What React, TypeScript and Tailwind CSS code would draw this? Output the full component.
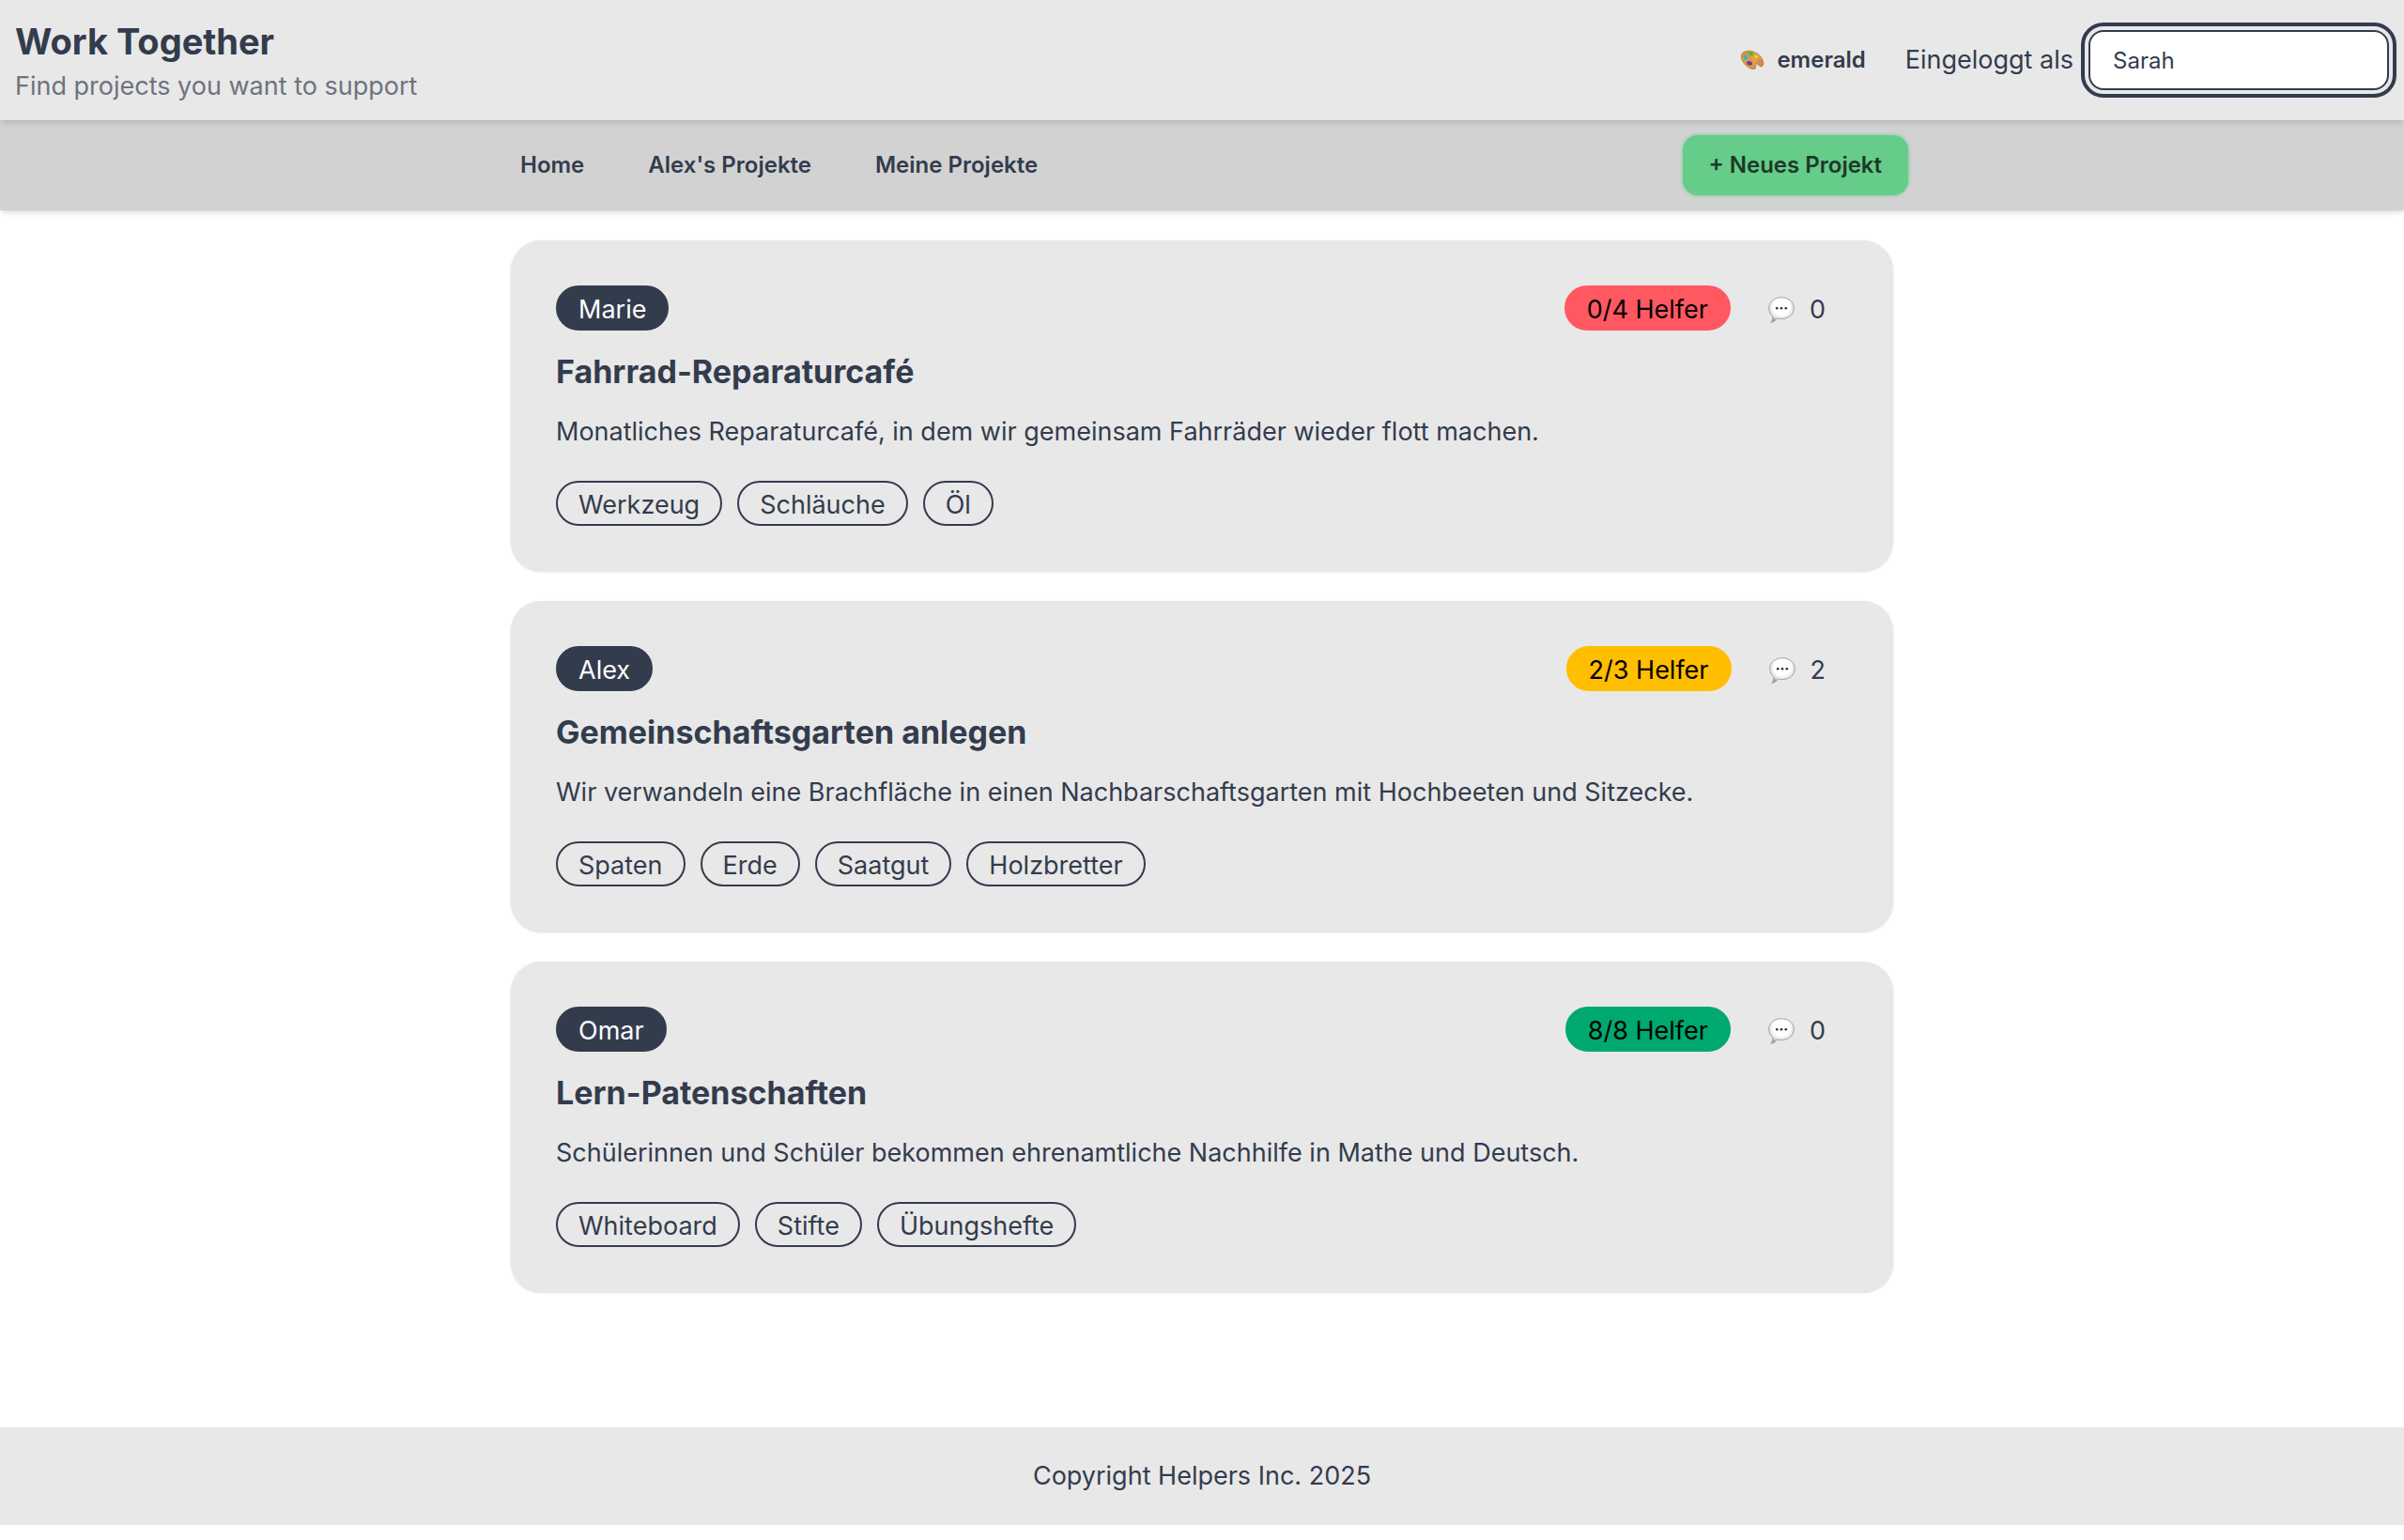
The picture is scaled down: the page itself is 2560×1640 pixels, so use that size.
import { useState } from "react";
import clsx from "clsx";

type Project = {
  owner: string;
  title: string;
  description: string;
  materials: string[];
  helpers: number;
  needed: number;
  comments: number;
};

const projects: Project[] = [
  {
    owner: "Marie",
    title: "Fahrrad-Reparaturcafé",
    description:
      "Monatliches Reparaturcafé, in dem wir gemeinsam Fahrräder wieder flott machen.",
    materials: ["Werkzeug", "Schläuche", "Öl"],
    helpers: 0,
    needed: 4,
    comments: 0,
  },
  {
    owner: "Alex",
    title: "Gemeinschaftsgarten anlegen",
    description:
      "Wir verwandeln eine Brachfläche in einen Nachbarschaftsgarten mit Hochbeeten und Sitzecke.",
    materials: ["Spaten", "Erde", "Saatgut", "Holzbretter"],
    helpers: 2,
    needed: 3,
    comments: 2,
  },
  {
    owner: "Omar",
    title: "Lern-Patenschaften",
    description:
      "Schülerinnen und Schüler bekommen ehrenamtliche Nachhilfe in Mathe und Deutsch.",
    materials: ["Whiteboard", "Stifte", "Übungshefte"],
    helpers: 8,
    needed: 8,
    comments: 0,
  },
];

const badge = "flex h-12 items-center rounded-full border-2 px-[22px] pt-1";

function PaletteIcon() {
  return (
    <svg viewBox="0 0 28 24" className="h-6 w-7" aria-hidden="true">
      <defs>
        <linearGradient id="wood" x1="0" y1="0" x2="1" y2="1">
          <stop offset="0" stopColor="#c9973f" />
          <stop offset="0.6" stopColor="#dba14a" />
          <stop offset="1" stopColor="#c4793a" />
        </linearGradient>
      </defs>
      <path
        d="M2.2 8.2C2 3.8 6.600 1.800 11.500 2.200C18.500 2.800 25.300 8.600 25.800 14.600C26 17.400 24.600 19.400 22.800 18.900C21 18.300 20.200 15.700 18.400 16.200C16.700 16.800 18.300 19 17.600 20.500C16.800 22.200 13 22 9.800 19.800C6 17.200 2.400 12.800 2.200 8.200Z"
        fill="url(#wood)"
        stroke="#a9762f"
        strokeWidth="0.7"
      />
      <ellipse cx="6.800" cy="9" rx="2.100" ry="2.600" fill="#2fb4d6" transform="rotate(-25 6.800 9)" />
      <ellipse cx="12.200" cy="5.200" rx="2.700" ry="1.900" fill="#4fba34" transform="rotate(15 12.200 5.200)" />
      <ellipse cx="18" cy="8.200" rx="2.300" ry="1.700" fill="#e7cf2c" transform="rotate(30 18 8.200)" />
      <ellipse cx="22" cy="13" rx="1.800" ry="2.400" fill="#ea7a50" transform="rotate(-25 22 13)" />
      <ellipse cx="11" cy="15.400" rx="3" ry="2.300" fill="#8a2fb0" transform="rotate(20 11 15.400)" />
    </svg>
  );
}

function CommentIcon() {
  return (
    <svg viewBox="0 0 28 28" className="size-7" aria-hidden="true">
      <defs>
        <radialGradient id="bubble" cx="0.5" cy="0.38" r="0.6">
          <stop offset="0.55" stopColor="#ffffff" />
          <stop offset="0.8" stopColor="#e4e4e4" />
          <stop offset="1" stopColor="#9c9c9c" />
        </radialGradient>
      </defs>
      <path
        d="M14 0.700C21.500 0.700 27.300 5.500 27.300 12C27.300 18.800 21.500 23.500 14 23.500C12.400 23.500 10.900 23.300 9.500 22.900C8 25.200 5.700 27 2.900 27.300C4.300 25.500 5 23.300 4.700 20.700C2.100 18.600 0.700 15.700 0.700 12C0.700 5.500 6.500 0.700 14 0.700Z"
        fill="url(#bubble)"
        stroke="#a3a3a3"
        strokeWidth="1"
      />
      <circle cx="9.200" cy="12.300" r="1.300" fill="#2c2c2c" />
      <circle cx="14" cy="12.300" r="1.300" fill="#2c2c2c" />
      <circle cx="18.800" cy="12.300" r="1.300" fill="#2c2c2c" />
    </svg>
  );
}

function Header() {
  const [user, setUser] = useState("Sarah");

  return (
    <header className="relative z-10 flex items-center justify-between bg-[#e8e8e8] p-4 shadow-md">
      <div className="flex flex-col">
        <h1 className="text-[38px] leading-14 font-bold">Work Together</h1>
        <p className="leading-10 text-[#6e737d]">
          Find projects you want to support
        </p>
      </div>
      <div className="flex items-center gap-4">
        <button
          type="button"
          className="flex h-16 items-center gap-3 px-[26px] text-2xl font-semibold"
        >
          <PaletteIcon />
          emerald
        </button>
        <div className="flex items-center gap-4">
          <label htmlFor="user">Eingeloggt als</label>
          <input
            id="user"
            type="text"
            value={user}
            onChange={(e) => setUser(e.target.value)}
            className="h-16 w-80 rounded-2xl border-2 border-[#333c4d] bg-white px-6 text-2xl outline-4 outline-offset-4 outline-[#333c4d]"
          />
        </div>
      </div>
    </header>
  );
}

function Navbar() {
  return (
    <nav className="bg-[#d2d2d2] shadow-md">
      <div className="mx-auto flex max-w-[1536px] items-center justify-between p-4 text-2xl font-semibold">
        <div className="flex items-center gap-4">
          <a href="#home" className="flex h-16 items-center px-[26px]">
            Home
          </a>
          <a href="#alex" className="flex h-16 items-center px-[26px]">
            Alex's Projekte
          </a>
          <a href="#meine" className="flex h-16 items-center px-[26px]">
            Meine Projekte
          </a>
        </div>
        <button
          type="button"
          className="h-16 rounded-2xl bg-[#66cc8a] px-7 text-[#1b3a28] shadow-[0_0_4px_#66cc8a]"
        >
          + Neues Projekt
        </button>
      </div>
    </nav>
  );
}

function ProjectCard({ project }: { project: Project }) {
  const { owner, title, description, materials, helpers, needed, comments } =
    project;

  return (
    <article className="flex flex-col gap-4 rounded-[32px] bg-[#e8e8e8] p-12 shadow-sm">
      <div className="flex items-center justify-between">
        <span className={clsx(badge, "border-[#333c4d] bg-[#333c4d] text-white")}>
          {owner}
        </span>
        <div className="flex items-center gap-4">
          <span
            className={clsx(
              badge,
              "text-black",
              helpers === 0 && "border-[#ff5861] bg-[#ff5861]",
              helpers > 0 && helpers < needed && "border-[#ffbe00] bg-[#ffbe00]",
              helpers >= needed && "border-[#00a96e] bg-[#00a96e]"
            )}
          >
            {helpers}/{needed} Helfer
          </span>
          <span className={clsx(badge, "gap-4 border-transparent")}>
            <CommentIcon />
            {comments}
          </span>
        </div>
      </div>
      <h2 className="text-[34px] leading-14 font-bold">{title}</h2>
      <p className="leading-10">{description}</p>
      <ul className="mt-4 flex flex-wrap gap-4">
        {materials.map((material) => (
          <li key={material} className={clsx(badge, "border-[#333c4d]")}>
            {material}
          </li>
        ))}
      </ul>
    </article>
  );
}

export default function App() {
  return (
    <div className="flex min-h-screen flex-col bg-white pb-4 font-['Inter',sans-serif] text-[27px] leading-10 text-[#333c4d]">
      <Header />
      <Navbar />
      <main className="mx-auto flex w-full max-w-[1536px] grow flex-col gap-8 p-8">
        {projects.map((project) => (
          <ProjectCard key={project.title} project={project} />
        ))}
      </main>
      <footer className="bg-[#e8e8e8] p-8 text-center">
        Copyright Helpers Inc. 2025
      </footer>
    </div>
  );
}
